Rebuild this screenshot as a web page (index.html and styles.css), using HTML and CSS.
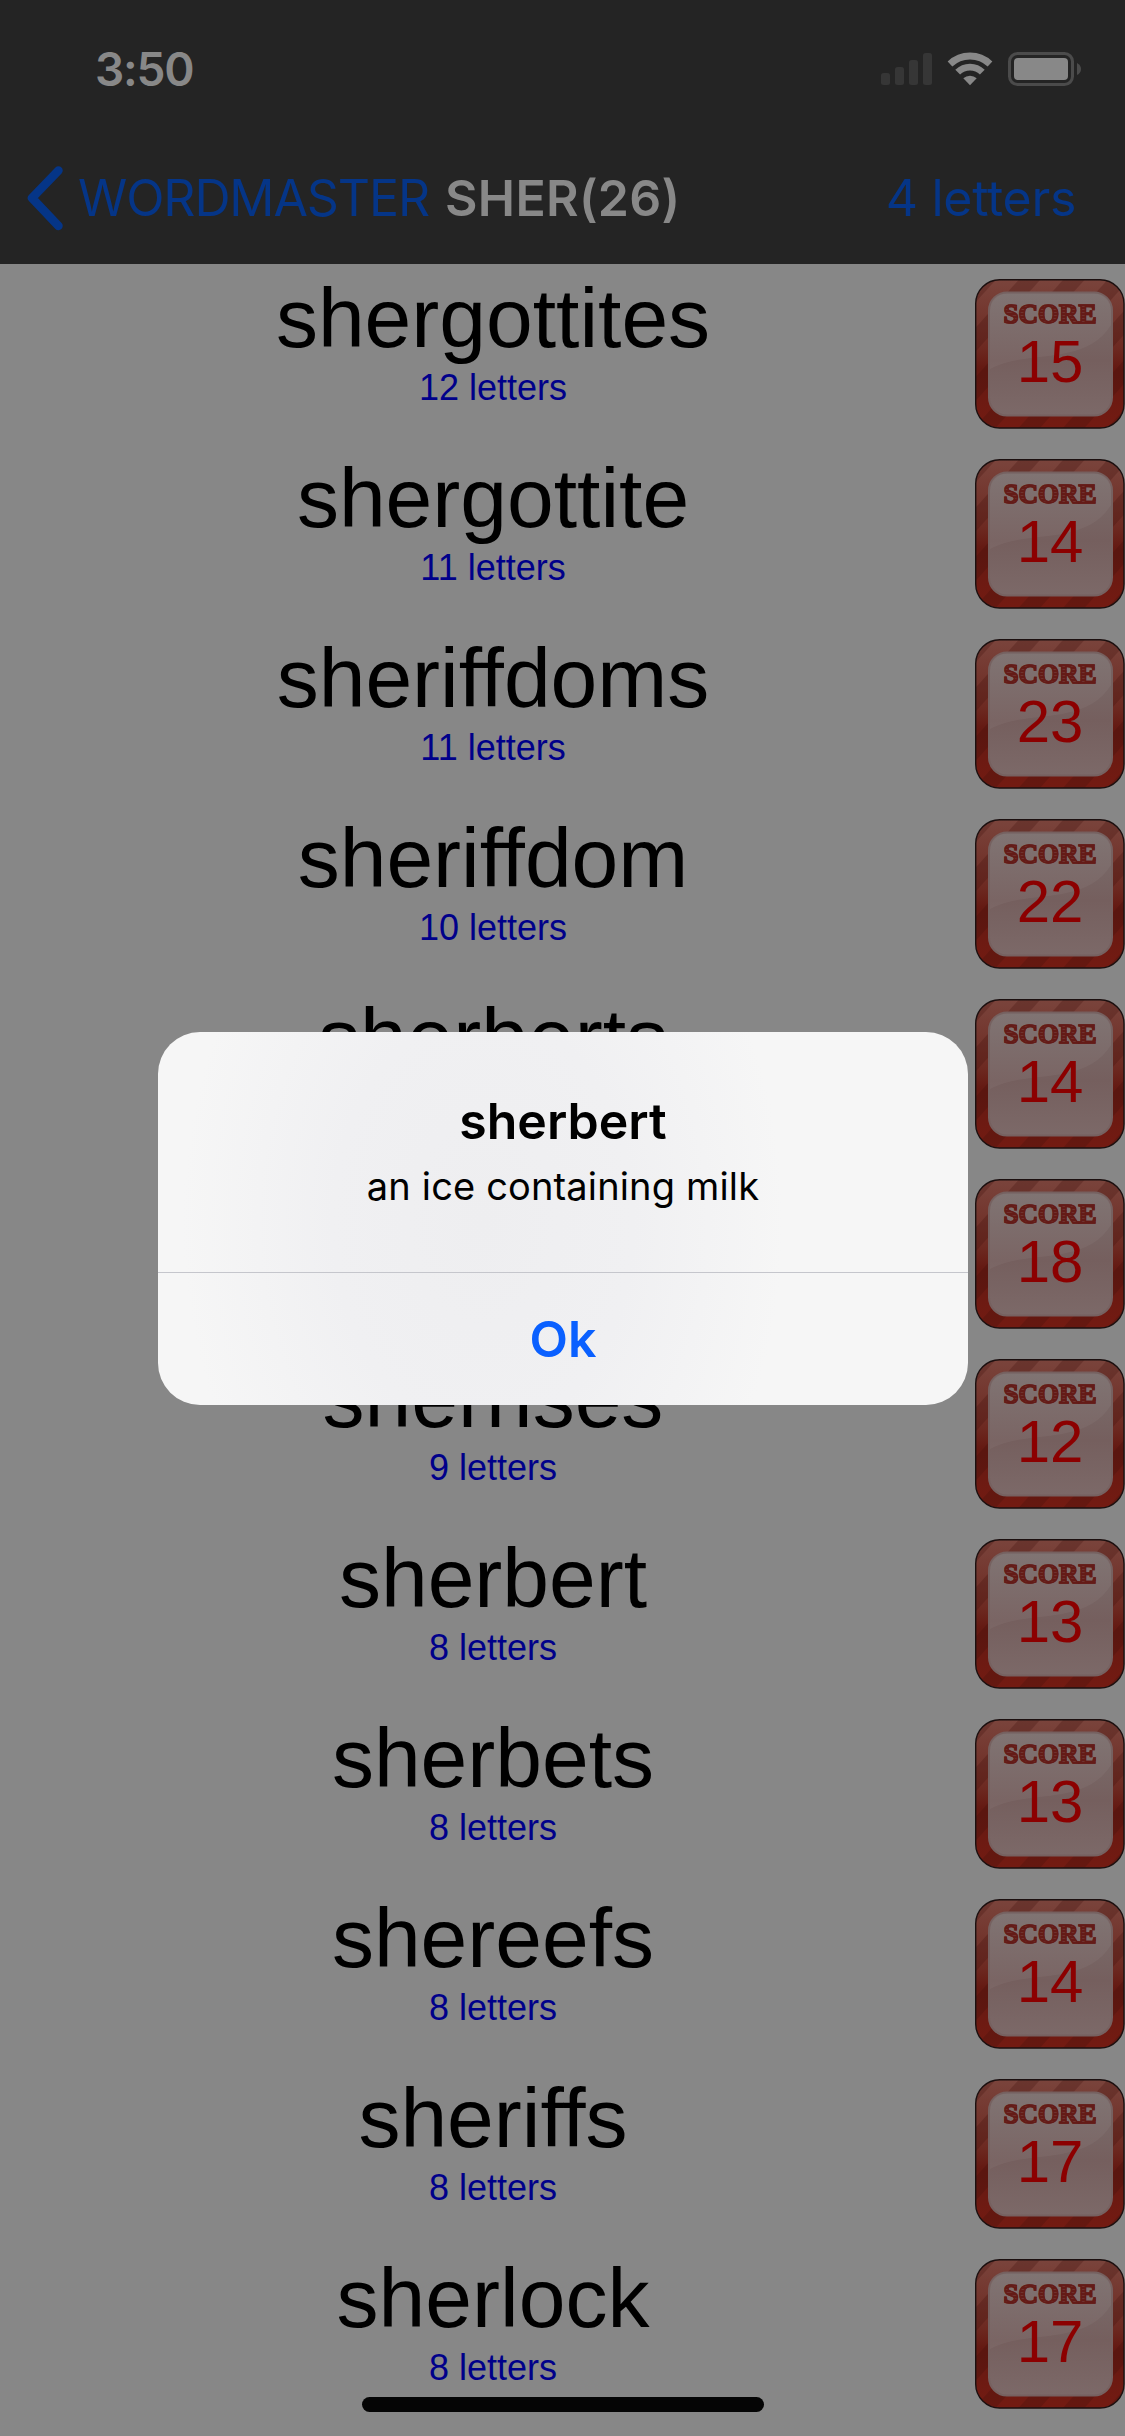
FILE: index.html
```html
<!DOCTYPE html>
<html lang="en">

<head>
    <meta charset="UTF-8">
    <meta name="viewport" content="width=device-width, initial-scale=1.0">
    <title>Wordmaster</title>
    <link rel="stylesheet" href="styles.css">
</head>

<body>
    <header class="topo">
        <div class="status">
            <span class="hora">3:50</span>
            <div class="status_icones">
                <svg class="sinal" width="52" height="36" viewBox="0 0 52 36">
                    <g fill="#363636">
                        <rect x="0" y="22" width="9" height="12" rx="2.5" />
                        <rect x="14" y="16" width="9" height="18" rx="2.5" />
                        <rect x="28" y="9" width="9" height="25" rx="2.5" />
                        <rect x="42" y="2" width="9" height="32" rx="2.5" />
                    </g>
                </svg>
                <svg class="wifi" width="46" height="36" viewBox="0 0 46 36">
                    <g fill="none" stroke="#888" stroke-width="6.800">
                        <path d="M3 13 A29 29 0 0 1 43 13" />
                        <path d="M10.700 21.200 A17.500 17.500 0 0 1 35.300 21.200" />
                    </g>
                    <path d="M16.300 27.300 A10 10 0 0 1 29.700 27.300 L23 34.300 Z" fill="#888" />
                </svg>
                <svg class="bateria" width="74" height="36" viewBox="0 0 74 36">
                    <rect x="1.500" y="2.500" width="63" height="31" rx="8" fill="none" stroke="#4b4b4b" stroke-width="3" />
                    <rect x="6" y="7" width="54" height="22" rx="4" fill="#888" />
                    <path d="M69 12 Q73 14 73 18 Q73 22 69 24 Z" fill="#4b4b4b" />
                </svg>
            </div>
        </div>
        <nav class="barra">
            <svg class="voltar" width="38" height="70" viewBox="0 0 38 70">
                <path d="M32.500 7.500 L6 35 L32.500 63" fill="none" stroke="#053587" stroke-width="8.500" stroke-linecap="round" stroke-linejoin="round" />
            </svg>
            <span class="link link_voltar">WORDMASTER</span>
            <h1>SHER(26)</h1>
            <span class="link link_letras">4 letters</span>
        </nav>
    </header>

    <!-- Score tile artwork, used by every row -->
    <svg class="modelos" width="0" height="0">
        <defs>
            <linearGradient id="moldura" x1="0" y1="0" x2="0" y2="1">
                <stop offset="0" stop-color="#7a443c" />
                <stop offset="0.45" stop-color="#6d2a22" />
                <stop offset="0.6" stop-color="#641912" />
                <stop offset="1" stop-color="#741b12" />
            </linearGradient>
            <linearGradient id="fundo" x1="0" y1="0" x2="0" y2="1">
                <stop offset="0" stop-color="#7b6e6d" />
                <stop offset="0.55" stop-color="#755f5e" />
                <stop offset="1" stop-color="#7c6968" />
            </linearGradient>
            <pattern id="listras" width="33" height="33" patternUnits="userSpaceOnUse" patternTransform="rotate(42)">
                <rect width="16" height="33" fill="#40100b" opacity="0.27" />
            </pattern>
            <symbol id="peca" viewBox="0 0 150 150">
                <rect x="0.700" y="0.700" width="148.300" height="148.300" rx="24" fill="url(#moldura)" />
                <rect x="0.700" y="0.700" width="148.300" height="148.300" rx="24" fill="url(#listras)" stroke="#1c1010" stroke-width="1.400" />
                <rect x="14" y="13.500" width="123" height="123" rx="18" fill="url(#fundo)" stroke="#766160" stroke-width="2" />
                <path d="M15 90 C50 70 110 88 136 46 L136 32 Q136 14.500 118 14.500 L33 14.500 Q15 14.500 15 32 Z" fill="#fff" opacity="0.045" />
            </symbol>
        </defs>
    </svg>

    <main id="lista"></main>

    <div class="alerta">
        <div class="alerta_texto">
            <h2>sherbert</h2>
            <p>an ice containing milk</p>
        </div>
        <div class="alerta_botao">Ok</div>
    </div>

    <div class="indicador"></div>

    <script src="script.js"></script>
</body>

</html>
```
FILE: styles.css
```css
* {
    margin: 0;
    padding: 0;
    box-sizing: border-box;
}

body {
    width: 1125px;
    height: 2436px;
    position: relative;
    overflow: hidden;
    background-color: #878787;
    font-family: "Liberation Sans", Arial, sans-serif;
}

/* --------------------- Topo --------------------- */

.topo {
    height: 264px;
    background-color: #242424;
    font-family: Inter, sans-serif;
}

.status {
    height: 132px;
    padding: 0 43px 0 95px;
    display: flex;
    justify-content: space-between;
}

.hora {
    margin-top: 41px;
    font-size: 46px;
    line-height: 56px;
    font-weight: 600;
    color: #888;
    letter-spacing: -1.2px;
}

.status_icones {
    display: flex;
    align-items: flex-start;
    padding-top: 51px;
}

.wifi {
    margin-left: 14px;
}

.bateria {
    margin-left: 15px;
}

.barra {
    height: 132px;
    padding: 0 49px 0 26px;
    display: flex;
    align-items: center;
    white-space: nowrap;
}

.link {
    font-size: 50px;
    line-height: 60px;
    color: #053587;
}

.link_voltar {
    margin-left: 14px;
    width: 350px;
    letter-spacing: -1.1px;
}

.link_letras {
    margin-left: auto;
    letter-spacing: -0.3px;
}

.barra h1 {
    margin-left: 17px;
    font-size: 50px;
    line-height: 60px;
    font-weight: 600;
    color: #888;
    letter-spacing: 0.3px;
}

/* --------------------- Lista --------------------- */

.modelos {
    position: absolute;
}

.linha {
    height: 180px;
    display: flex;
    justify-content: space-between;
}

.palavra {
    width: 986px;
    padding-top: 6px;
    text-align: center;
}

.palavra h3 {
    font-size: 84px;
    line-height: 96px;
    font-weight: normal;
    color: #000;
}

.palavra p {
    margin-top: 2px;
    font-size: 36px;
    line-height: 40px;
    color: #00008a;
}

.pontos {
    width: 150px;
    height: 150px;
    margin: 15px 0 0 -11px;
    display: grid;
}

.pontos > * {
    grid-area: 1 / 1;
}

.pontos_texto {
    display: flex;
    flex-direction: column;
    align-items: center;
    padding-top: 22px;
}

/* engraved lettering: solid outline, hatched fill */
.rotulo {
    font-family: "Liberation Serif", serif;
    font-size: 27px;
    line-height: 26px;
    font-weight: bold;
    -webkit-text-stroke: 1.5px #641b17;
    color: transparent;
    background: repeating-linear-gradient(#641b17 0 2px, #70332f 2px 3px);
    -webkit-background-clip: text;
    background-clip: text;
}

.valor {
    margin-top: 1px;
    font-size: 60px;
    line-height: 68px;
    color: #8c0000;
}

/* --------------------- Alerta --------------------- */

.alerta {
    position: absolute;
    left: 158px;
    top: 1032px;
    width: 810px;
    height: 373px;
    border-radius: 42px;
    overflow: hidden;
    text-align: center;
    font-family: Inter, sans-serif;
    background: radial-gradient(ellipse 300px 420px at 325px 190px, #eeeef0 0%, #f0f0f2 50%, #f6f6f6 100%);
}

.alerta_texto {
    height: 241px;
    padding-top: 57px;
    border-bottom: 1px solid #c5c6cc;
}

.alerta h2 {
    font-size: 50px;
    line-height: 64px;
    font-weight: 600;
}

.alerta p {
    margin-top: 2px;
    font-size: 38px;
    line-height: 62px;
    letter-spacing: 0.15px;
}

.alerta_botao {
    font-size: 50px;
    line-height: 133px;
    font-weight: 600;
    color: #0a60ff;
}

.indicador {
    position: absolute;
    left: 362px;
    top: 2397px;
    width: 402px;
    height: 15px;
    border-radius: 8px;
    background-color: #050505;
}
```
FILE: script.js
```js
const palavras = [
    ['shergottites', 15],
    ['shergottite', 14],
    ['sheriffdoms', 23],
    ['sheriffdom', 22],
    ['sherberts', 14],
    ['sherlocks', 18],
    ['sherrises', 12],
    ['sherbert', 13],
    ['sherbets', 13],
    ['shereefs', 14],
    ['sheriffs', 17],
    ['sherlock', 17],
];

document.getElementById('lista').innerHTML = palavras.map(([palavra, pontos]) => `
    <section class="linha">
        <div class="palavra">
            <h3>${palavra}</h3>
            <p>${palavra.length} letters</p>
        </div>
        <div class="pontos">
            <svg width="150" height="150"><use href="#peca" /></svg>
            <div class="pontos_texto">
                <span class="rotulo">SCORE</span>
                <span class="valor">${pontos}</span>
            </div>
        </div>
    </section>
`).join('');
```
